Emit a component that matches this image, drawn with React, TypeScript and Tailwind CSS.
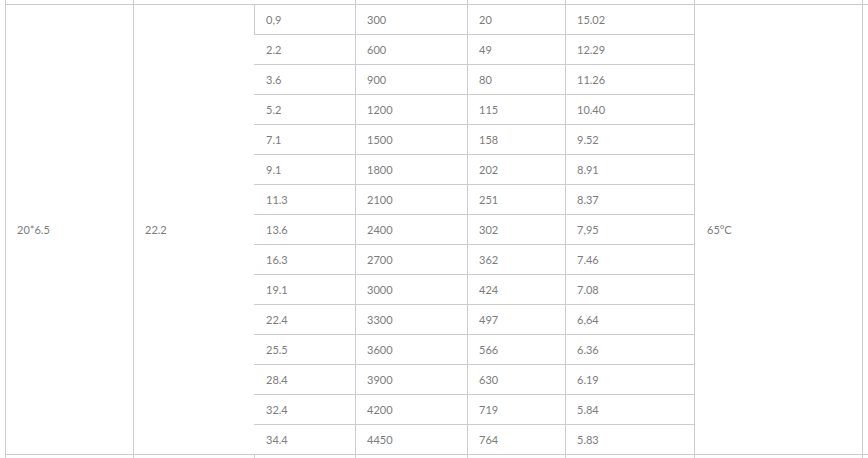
const rows: [string, string, string, string][] = [
  ["0,9", "300", "20", "15.02"],
  ["2.2", "600", "49", "12.29"],
  ["3.6", "900", "80", "11.26"],
  ["5.2", "1200", "115", "10.40"],
  ["7.1", "1500", "158", "9.52"],
  ["9.1", "1800", "202", "8.91"],
  ["11.3", "2100", "251", "8.37"],
  ["13.6", "2400", "302", "7,95"],
  ["16.3", "2700", "362", "7.46"],
  ["19.1", "3000", "424", "7.08"],
  ["22.4", "3300", "497", "6,64"],
  ["25.5", "3600", "566", "6.36"],
  ["28.4", "3900", "630", "6.19"],
  ["32.4", "4200", "719", "5.84"],
  ["34.4", "4450", "764", "5.83"],
];

const line = "border-[#cccccc]";

function Strip({ height, firstBorder }: { height: string; firstBorder: boolean }) {
  return (
    <div className={`ml-[5px] flex ${height}`}>
      <div className={`w-[128px] border-l ${line}`} />
      <div className={`w-[121px] border-l ${line}`} />
      <div className="flex w-[440px]">
        <div className={`w-[101px] ${firstBorder ? `border-l ${line}` : ""}`} />
        <div className={`w-[112px] border-l ${line}`} />
        <div className={`w-[98px] border-l ${line}`} />
        <div className={`w-[129px] border-l ${line}`} />
      </div>
      <div className={`w-[169px] border-l border-r ${line}`} />
    </div>
  );
}

export default function App() {
  return (
    <div className="h-[458px] w-[868px] overflow-hidden bg-white font-['Lato','Open_Sans',sans-serif] text-[11px] text-[#7c7c7c]">
      <Strip height="h-[4px]" firstBorder={false} />

      <div className={`ml-[5px] flex border-t border-b ${line}`}>
        <div className={`flex w-[128px] items-center border-l pl-[11px] pt-[2px] ${line}`}>20*6.5</div>
        <div className={`flex w-[121px] items-center border-l pl-[11px] pt-[2px] ${line}`}>22.2</div>
        <div className="flex w-[440px] flex-col">
          {rows.map((r, i) => (
            <div
              key={i}
              className={`flex ${i === rows.length - 1 ? "h-[29px]" : `h-[30px] border-b ${line}`}`}
            >
              <div
                className={`flex w-[101px] items-center border-l pl-[11px] pt-[2px] ${i === 0 ? line : "border-transparent"}`}
              >
                {r[0]}
              </div>
              <div className={`flex w-[112px] items-center border-l pl-[11px] pt-[2px] ${line}`}>{r[1]}</div>
              <div className={`flex w-[98px] items-center border-l pl-[11px] pt-[2px] ${line}`}>{r[2]}</div>
              <div className={`flex w-[129px] items-center border-l pl-[11px] pt-[2px] ${line}`}>{r[3]}</div>
            </div>
          ))}
        </div>
        <div className={`flex w-[169px] items-center border-l border-r pl-[12px] pt-[2px] ${line}`}>65°C</div>
      </div>

      <Strip height="h-[4px]" firstBorder={true} />
    </div>
  );
}
